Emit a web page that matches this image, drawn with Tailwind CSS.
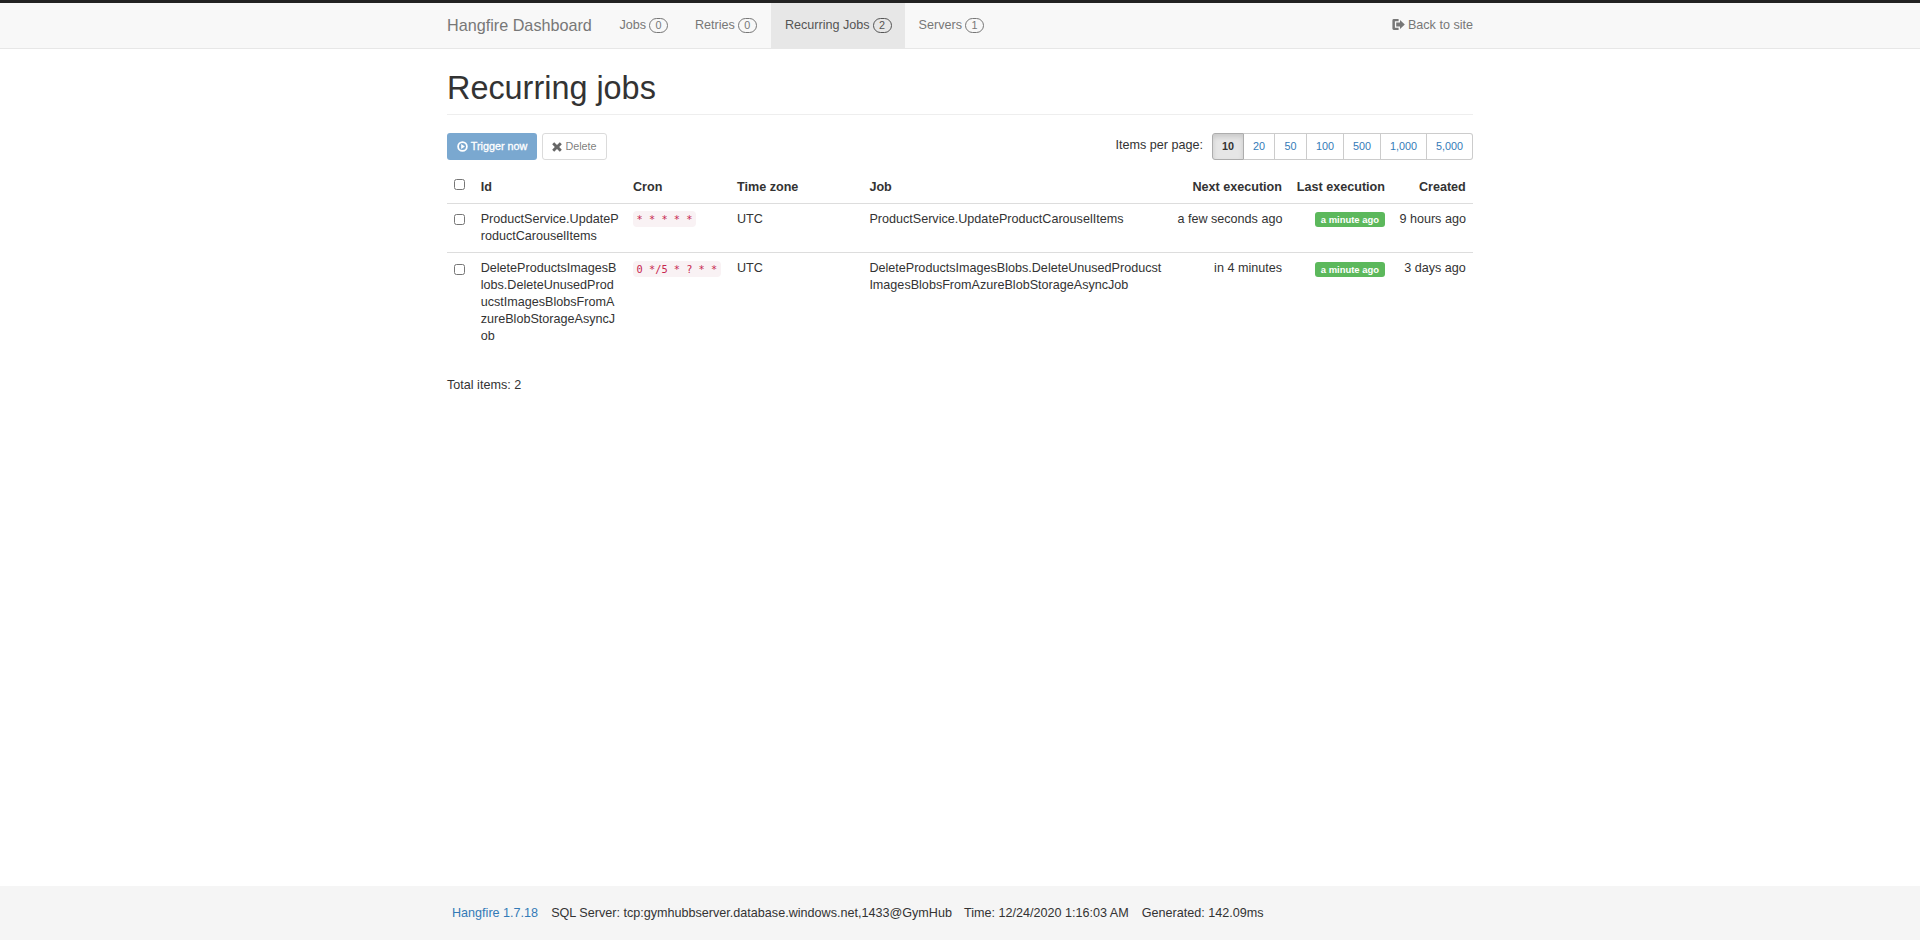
<!DOCTYPE html>
<html lang="en">
<head>
  <meta charset="UTF-8" />
  <title>Recurring jobs - Hangfire</title>
  <script src="https://cdn.jsdelivr.net/npm/@tailwindcss/browser@4"></script>
</head>
<body class="bg-white text-[#333] font-['Liberation_Sans',Arial,sans-serif] text-[12.6px] leading-[17px] h-[940px] flex flex-col overflow-hidden">
  <!-- Navbar -->
  <nav class="bg-[#f8f8f8] border-t-[3px] border-t-[#222] border-b border-b-[#e7e7e7] h-[49px] shrink-0">
    <div class="w-[1026px] ml-[447px] flex items-stretch h-[45px] text-[12.6px] text-[#777]">
      <a href="#" class="text-[16.2px] flex items-center mr-[14px]">Hangfire Dashboard</a>
      <a href="#" class="flex items-center px-[13.5px] gap-[3px]">Jobs <span class="border border-[#777] rounded-full h-[15px] min-w-[19px] text-[10.8px] leading-[13px] text-center">0</span></a>
      <a href="#" class="flex items-center pl-[13.5px] pr-[14.5px] gap-[3px]">Retries <span class="border border-[#777] rounded-full h-[15px] min-w-[19px] text-[10.8px] leading-[13px] text-center">0</span></a>
      <a href="#" class="flex items-center px-[13.5px] gap-[3px] bg-[#e7e7e7] text-[#555]">Recurring Jobs <span class="border border-[#555] rounded-full h-[15px] min-w-[19px] text-[10.8px] leading-[13px] text-center">2</span></a>
      <a href="#" class="flex items-center px-[13.5px] gap-[3px]">Servers <span class="border border-[#777] rounded-full h-[15px] min-w-[19px] text-[10.8px] leading-[13px] text-center">1</span></a>
      <a href="#" class="ml-auto flex items-center gap-[3px]">
        <svg class="w-[13px] h-[13px] mb-[3px]" viewBox="0 0 13 13" fill="#777"><path d="M1.8 1H6.6V3.2H2.9V9.8H6.6V12H1.8Q0.4 12 0.4 10.6V2.4Q0.4 1 1.8 1Z"/><path d="M4.2 4.4H8V2L12.8 6.5L8 11V8.6H4.2Z"/></svg>
        Back to site
      </a>
    </div>
  </nav>

  <main class="w-[1026px] ml-[447px] grow">
    <h1 class="text-[32.4px] leading-[36px] text-[#333] mt-[21px] pb-[8px] border-b border-[#eee]">Recurring jobs</h1>

    <!-- Toolbar -->
    <div class="flex items-center mt-[18px]">
      <button class="h-[27px] w-[90px] rounded-[3px] bg-[#337ab7]/65 text-white text-[10.8px] [-webkit-text-stroke:0.3px_white] flex items-center justify-center gap-[3px]">
        <svg class="w-[11px] h-[11px]" viewBox="0 0 12 12"><circle cx="6" cy="6" r="4.8" fill="none" stroke="#fff" stroke-width="1.9"/><path d="M4.6 3.4L8.6 6L4.6 8.6Z" fill="#fff"/></svg>
        Trigger now
      </button>
      <button class="h-[27px] w-[65px] ml-[5px] rounded-[3px] border border-[#ccc]/70 text-[#333]/65 text-[10.8px] flex items-center justify-center gap-[3px]">
        <svg class="w-[10px] h-[10px]" viewBox="0 0 10 10"><path d="M2.2 0.3L5 2.9L7.8 0.3L9.8 2.3L7.2 5L9.8 7.7L7.8 9.7L5 7.1L2.2 9.7L0.2 7.7L2.8 5L0.2 2.3Z" fill="#666"/></svg>
        Delete
      </button>
      <span class="ml-auto mr-[9px] text-[12.6px] -mt-[2px]">Items per page:</span>
      <div class="flex h-[27px] text-[10.8px] text-[#337ab7]">
        <button class="w-[32px] bg-[#e6e6e6] border border-[#adadad] rounded-l-[3px] text-[#333] font-bold shadow-[inset_0_3px_5px_rgba(0,0,0,0.125)]">10</button>
        <button class="w-[31px] border border-l-0 border-[#ccc]">20</button>
        <button class="w-[32px] border border-l-0 border-[#ccc]">50</button>
        <button class="w-[37px] border border-l-0 border-[#ccc]">100</button>
        <button class="w-[37px] border border-l-0 border-[#ccc]">500</button>
        <button class="w-[46px] border border-l-0 border-[#ccc]">1,000</button>
        <button class="w-[46px] border border-l-0 border-[#ccc] rounded-r-[3px]">5,000</button>
      </div>
    </div>

    <!-- Jobs table -->
    <table class="w-[1026px] table-fixed mt-[8px] border-collapse">
      <colgroup>
        <col class="w-[26.5px]" /><col class="w-[152.3px]" /><col class="w-[104px]" /><col class="w-[132.4px]" />
        <col class="w-[308px]" /><col class="w-[119px]" /><col class="w-[103px]" /><col class="w-[80.8px]" />
      </colgroup>
      <thead>
        <tr class="border-b border-[#ddd] font-bold">
          <th class="pl-[7.2px] pt-[11px] text-left align-top"><input type="checkbox" class="block w-[11px] h-[11px]" /></th>
          <th class="px-[7.2px] pt-[11px] pb-[7px] text-left">Id</th>
          <th class="px-[7.2px] pt-[11px] pb-[7px] text-left">Cron</th>
          <th class="px-[7.2px] pt-[11px] pb-[7px] text-left">Time zone</th>
          <th class="px-[7.2px] pt-[11px] pb-[7px] text-left">Job</th>
          <th class="px-[7.2px] pt-[11px] pb-[7px] text-right whitespace-nowrap">Next execution</th>
          <th class="px-[7.2px] pt-[11px] pb-[7px] text-right whitespace-nowrap">Last execution</th>
          <th class="px-[7.2px] pt-[11px] pb-[7px] text-right">Created</th>
        </tr>
      </thead>
      <tbody class="align-top">
        <tr class="border-b border-[#ddd]">
          <td class="pl-[7.2px] py-[7.2px]"><input type="checkbox" class="block w-[11px] h-[11px] mt-[3px]" /></td>
          <td class="px-[7.2px] py-[7.2px] break-all">ProductService.UpdateProductCarouselItems</td>
          <td class="px-[7.2px] py-[7.2px]"><code class="font-['DejaVu_Sans_Mono',monospace] text-[10.3px] leading-[16px] inline-block h-[16px] px-[3.6px] bg-[#f9f2f4] text-[#c7254e] rounded-[4px] whitespace-pre">* * * * *</code></td>
          <td class="px-[7.2px] py-[7.2px]">UTC</td>
          <td class="px-[7.2px] py-[7.2px] break-all">ProductService.UpdateProductCarouselItems</td>
          <td class="px-[7.2px] py-[7.2px] text-right whitespace-nowrap">a few seconds ago</td>
          <td class="px-[7.2px] py-[7.2px] text-right"><span class="inline-block bg-[#5cb85c] text-white font-bold text-[9.45px] leading-[15px] h-[15px] px-[6px] rounded-[3px] whitespace-nowrap">a minute ago</span></td>
          <td class="px-[7.2px] py-[7.2px] text-right whitespace-nowrap">9 hours ago</td>
        </tr>
        <tr>
          <td class="pl-[7.2px] py-[7.2px]"><input type="checkbox" class="block w-[11px] h-[11px] mt-[3px]" /></td>
          <td class="px-[7.2px] pt-[6.4px] pb-[8px] break-all">DeleteProductsImagesBlobs.DeleteUnusedProducstImagesBlobsFromAzureBlobStorageAsyncJob</td>
          <td class="px-[7.2px] py-[7.2px]"><code class="font-['DejaVu_Sans_Mono',monospace] text-[10.3px] leading-[16px] inline-block h-[16px] px-[3.6px] bg-[#f9f2f4] text-[#c7254e] rounded-[4px] whitespace-pre">0 */5 * ? * *</code></td>
          <td class="px-[7.2px] pt-[6.4px]">UTC</td>
          <td class="px-[7.2px] pt-[6.4px] break-all">DeleteProductsImagesBlobs.DeleteUnusedProducstImagesBlobsFromAzureBlobStorageAsyncJob</td>
          <td class="px-[7.2px] pt-[6.4px] text-right whitespace-nowrap">in 4 minutes</td>
          <td class="px-[7.2px] py-[7.2px] text-right"><span class="inline-block bg-[#5cb85c] text-white font-bold text-[9.45px] leading-[15px] h-[15px] px-[6px] rounded-[3px] whitespace-nowrap">a minute ago</span></td>
          <td class="px-[7.2px] pt-[6.4px] text-right whitespace-nowrap">3 days ago</td>
        </tr>
      </tbody>
    </table>

    <p class="mt-[24px]">Total items: 2</p>
  </main>

  <!-- Footer -->
  <footer class="bg-[#f5f5f5] h-[54px] shrink-0 flex items-center">
    <div class="ml-[452px] flex text-[12.6px]">
      <a href="#" class="text-[#337ab7] mr-[13px]">Hangfire 1.7.18</a>
      <span class="mr-[12px]">SQL Server: tcp:gymhubbserver.database.windows.net,1433@GymHub</span>
      <span class="mr-[13px]">Time: 12/24/2020 1:16:03 AM</span>
      <span>Generated: 142.09ms</span>
    </div>
  </footer>
</body>
</html>
